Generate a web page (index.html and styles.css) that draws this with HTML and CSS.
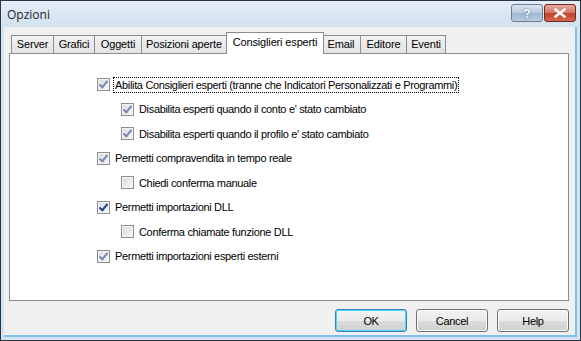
FILE: index.html
```html
<!DOCTYPE html>
<html lang="it">
<head>
    <meta charset="UTF-8">
    <title>Opzioni</title>
    <link rel="stylesheet" href="styles.css">
</head>
<body>

<div class="window">
    <div class="titlebar">
        <span class="title">Opzioni</span>
        <div class="caption-buttons">
            <div class="cap cap-help">?</div>
            <div class="cap cap-close">
                <svg width="12" height="10" viewBox="0 0 12 10">
                    <path d="M1.5 1.5 L10.5 8.5 M10.5 1.5 L1.5 8.5" stroke="#fff" stroke-width="2.6" stroke-linecap="square"/>
                </svg>
            </div>
        </div>
    </div>

    <div class="client">
        <div class="tabs">
            <div class="tab t-server">Server</div>
            <div class="tab t-grafici">Grafici</div>
            <div class="tab t-oggetti">Oggetti</div>
            <div class="tab t-posizioni">Posizioni aperte</div>
            <div class="tab t-consiglieri active">Consiglieri esperti</div>
            <div class="tab t-email">Email</div>
            <div class="tab t-editore">Editore</div>
            <div class="tab t-eventi">Eventi</div>
        </div>

        <div class="panel">
            <div class="options">
                <label class="option">
                    <span class="check checked"></span>
                    <span class="label focused">Abilita Consiglieri esperti (tranne che Indicatori Personalizzati e Programmi)</span>
                </label>
                <label class="option sub">
                    <span class="check checked"></span>
                    <span class="label">Disabilita esperti quando il conto e' stato cambiato</span>
                </label>
                <label class="option sub">
                    <span class="check checked"></span>
                    <span class="label">Disabilita esperti quando il profilo e' stato cambiato</span>
                </label>
                <label class="option">
                    <span class="check checked"></span>
                    <span class="label">Permetti compravendita in tempo reale</span>
                </label>
                <label class="option sub">
                    <span class="check"></span>
                    <span class="label">Chiedi conferma manuale</span>
                </label>
                <label class="option">
                    <span class="check checked hot"></span>
                    <span class="label">Permetti importazioni DLL</span>
                </label>
                <label class="option sub">
                    <span class="check"></span>
                    <span class="label">Conferma chiamate funzione DLL</span>
                </label>
                <label class="option">
                    <span class="check checked"></span>
                    <span class="label">Permetti importazioni esperti esterni</span>
                </label>
            </div>
        </div>

        <div class="buttons">
            <button class="btn default">OK</button>
            <button class="btn">Cancel</button>
            <button class="btn">Help</button>
        </div>
    </div>
</div>

</body>
</html>
```

FILE: styles.css
```css
body {
    margin: 0;
    padding: 0;
    background-color: #1b2a3a;
    font-family: "Liberation Sans", Arial, sans-serif;
    font-size: 11px;
    letter-spacing: -0.33px;
    color: #000;
}

.window {
    width: 579px;
    height: 339px;
    border: 1px solid #2b3645;
    background-color: #d5e3f1;
    display: flex;
    flex-direction: column;
    overflow: hidden;
}

.titlebar {
    height: 26px;
    display: flex;
    align-items: flex-start;
    justify-content: space-between;
    background: linear-gradient(#e3edf7, #d3e1ef);
}

.title {
    font-family: "Open Sans", "Liberation Sans", sans-serif;
    font-size: 12px;
    letter-spacing: 0;
    margin: 5px 0 0 6px;
    color: #1e1e1e;
}

.caption-buttons {
    display: flex;
    margin: 3px 4px 0 0;
    gap: 1px;
}

.cap {
    width: 30px;
    height: 16px;
    border: 1px solid #6b7f95;
    border-radius: 3px;
    display: flex;
    align-items: center;
    justify-content: center;
}

.cap-help {
    background: linear-gradient(#d9e5f2 0%, #b8cbe1 50%, #9fb6d2 51%, #b6cbe3 100%);
    color: #fff;
    font-weight: bold;
    font-size: 13px;
    letter-spacing: 0;
    text-shadow: 0 0 2px #41556f;
}

.cap-close {
    border-color: #6e2a22;
    background: linear-gradient(#e9a99b 0%, #d5705e 50%, #c2402b 51%, #d4684f 100%);
}

.client {
    flex: 1;
    margin: 0 3px 3px 3px;
    background-color: #f0f0f0;
    border-right: 2px solid #7fc0ea;
    border-bottom: 2px solid #7fc0ea;
    padding: 6px 6px 0 5px;
    display: flex;
    flex-direction: column;
}

.tabs {
    display: flex;
    align-items: flex-end;
    height: 20px;
    padding-left: 2px;
    position: relative;
    z-index: 1;
}

.tab {
    height: 18px;
    line-height: 17px;
    padding: 0;
    white-space: nowrap;
    letter-spacing: -0.15px;
    border: 1px solid #898c95;
    border-bottom: none;
    border-left: none;
    background: linear-gradient(#f2f2f2, #e3e3e3);
    box-sizing: border-box;
    text-align: center;
}

.t-server {
    border-left: 1px solid #898c95;
    width: 43px;
}

.t-grafici { width: 41px; }
.t-oggetti { width: 47px; }
.t-posizioni { width: 85px; }
.t-email { width: 39px; border-left: none; }
.t-editore { width: 46px; }
.t-eventi { width: 39px; }

.tab.active {
    height: 22px;
    width: 98px;
    margin: 0 -2px -1px -1px;
    border-left: 1px solid #898c95;
    border-right: 1px solid #898c95;
    background: #fff;
    line-height: 18px;
    position: relative;
    z-index: 2;
}

.panel {
    height: 248px;
    background-color: #fff;
    border: 1px solid #898c95;
    box-sizing: border-box;
}

.options {
    display: flex;
    flex-direction: column;
    padding: 24px 0 0 87px;
    gap: 11px;
}

.option {
    display: flex;
    align-items: center;
    height: 13.5px;
}

.option.sub {
    padding-left: 24px;
}

.check {
    width: 13px;
    height: 13px;
    box-sizing: border-box;
    border: 1px solid #8f8f8f;
    background: linear-gradient(135deg, #dcdcdc, #f7f7f7);
    box-shadow: inset 0 0 0 1px #f4f4f4;
    margin-right: 4px;
    flex-shrink: 0;
    position: relative;
}

.check.checked::after {
    content: "";
    position: absolute;
    left: 3px;
    top: 0px;
    width: 3px;
    height: 7px;
    border: solid #7789b2;
    border-width: 0 2px 2px 0;
    transform: rotate(40deg);
}

.check.hot::after {
    border-color: #21418d;
}

.label {
    white-space: nowrap;
    padding: 1px 1px;
}

.label.focused {
    outline: 1px dotted #000;
}

.buttons {
    display: flex;
    justify-content: flex-end;
    gap: 9px;
    margin-top: 8px;
    padding-right: 0;
}

.btn {
    width: 72px;
    height: 23px;
    font-family: "Liberation Sans", Arial, sans-serif;
    font-size: 11px;
    letter-spacing: -0.33px;
    border: 1px solid #707070;
    border-radius: 3px;
    background: linear-gradient(#f2f2f2 0%, #ebebeb 50%, #dddddd 51%, #cfcfcf 100%);
    box-shadow: inset 0 0 0 1px #fbfbfb;
    padding: 0;
}

.btn.default {
    border-color: #3c7fb1;
    box-shadow: inset 0 0 0 1px #48d8fb;
}
```
